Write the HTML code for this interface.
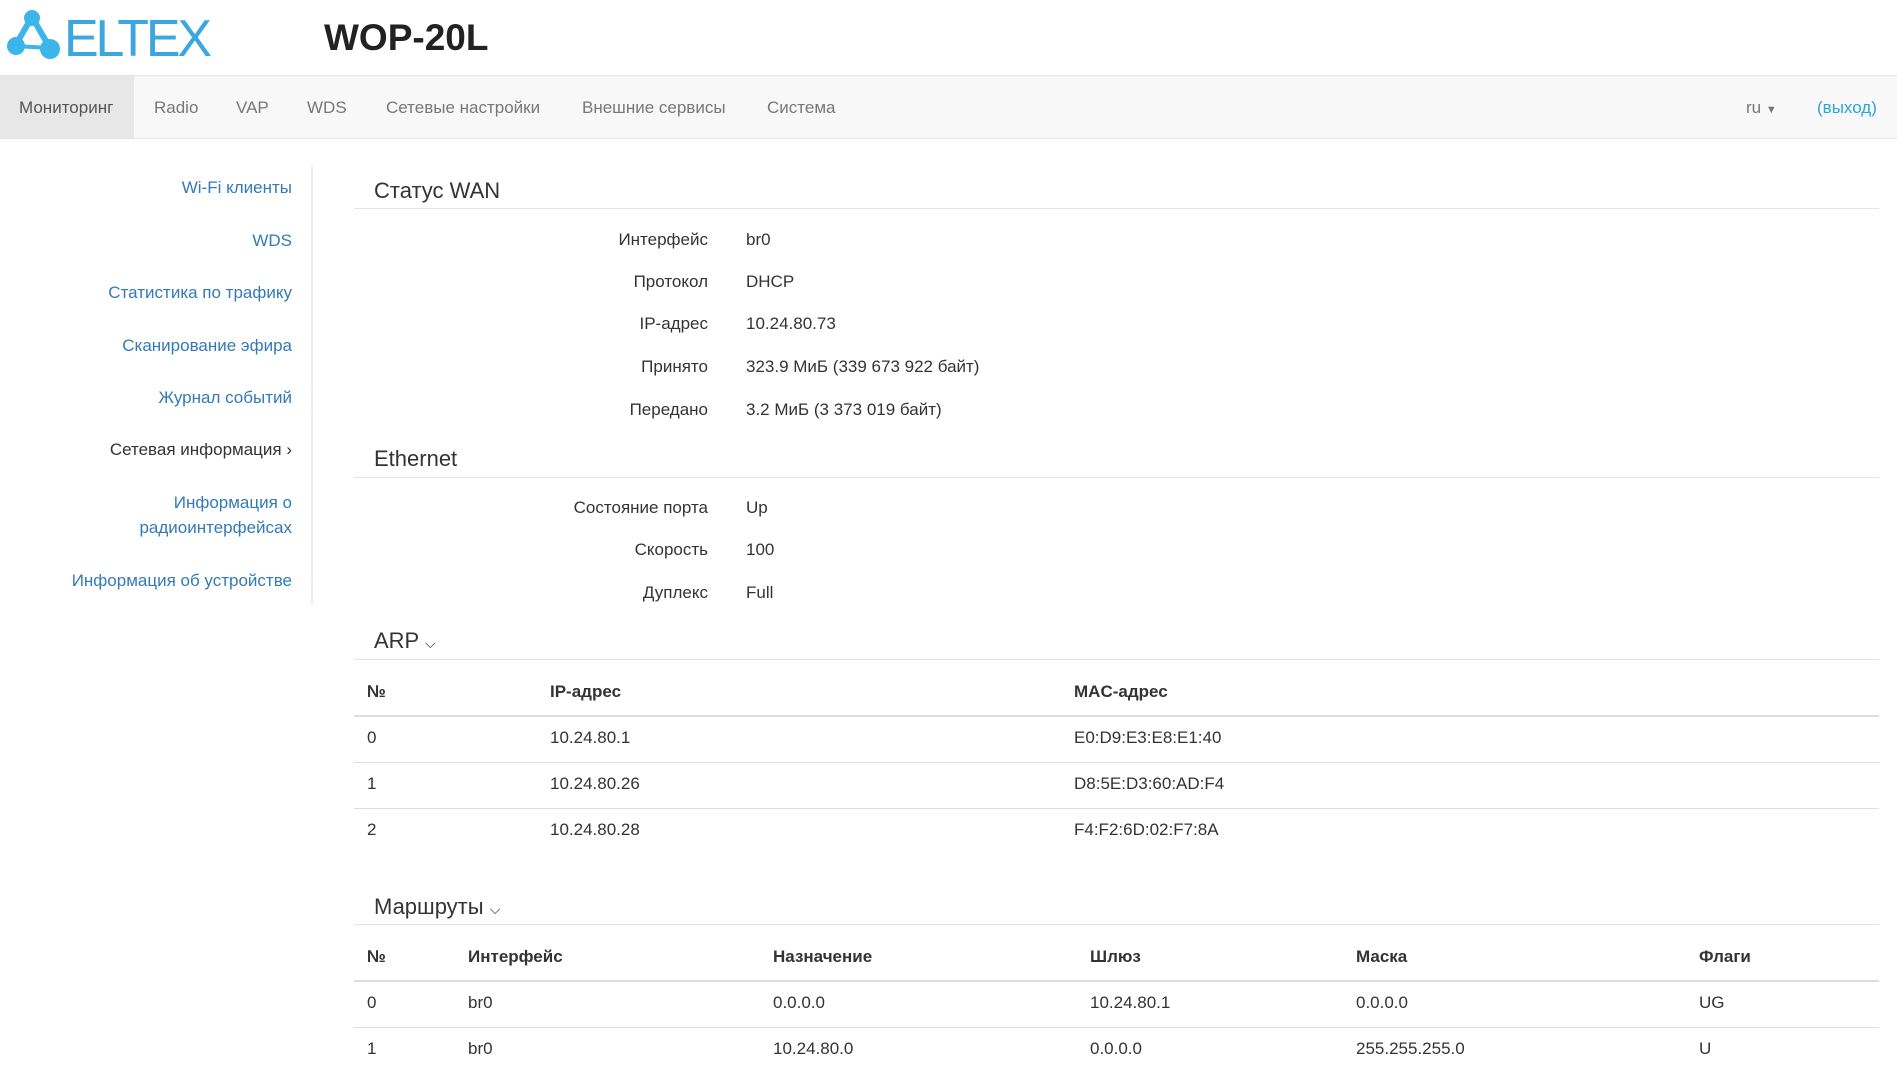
<!DOCTYPE html>
<html><head><meta charset="utf-8"><style>
*{margin:0;padding:0;box-sizing:border-box}
body{width:1897px;height:1079px;overflow:hidden;background:#fff;font-family:"Liberation Sans",Arial,sans-serif;color:#333;font-size:17px;position:relative}
.a{position:absolute;white-space:nowrap;line-height:20px}
.nav{position:absolute;left:0;top:75px;width:1897px;height:64px;background:#f8f8f8;border-top:1px solid #e7e7e7;border-bottom:1px solid #e7e7e7}
.nav .a{color:#777;top:22px}
.side{position:absolute;left:0;width:292px;text-align:right;color:#337ab7;line-height:25px}
.h{position:absolute;left:374px;font-size:22px;color:#333;line-height:26px}
.hr{position:absolute;left:354px;width:1525px;height:1px;background:#e5e5e5}
.lb{position:absolute;right:1189px;text-align:right}
.v{position:absolute;left:746px}
b{font-weight:bold}
</style></head><body>
<svg style="position:absolute;left:0;top:0" width="260" height="70">
<g fill="#3cb5ea" stroke="#3cb5ea">
<line x1="32" y1="17" x2="15" y2="46" stroke-width="6"/>
<line x1="32" y1="17" x2="50" y2="48" stroke-width="6"/>
<line x1="15" y1="46" x2="50" y2="48" stroke-width="4"/>
<circle cx="32" cy="18" r="8" stroke="none"/>
<circle cx="16" cy="46" r="9" stroke="none"/>
<circle cx="50" cy="49" r="10" stroke="none"/>
</g>
<text x="64" y="56" font-family="Liberation Sans,sans-serif" font-size="52" fill="#3ba6e0" letter-spacing="2" textLength="150">ELTEX</text>
</svg>
<div class="a" style="left:324px;top:18px;font-size:37px;line-height:40px;font-weight:bold;color:#222">WOP-20L</div>
<div class="nav">
<div style="position:absolute;left:0;top:0;width:134px;height:62px;background:#e7e7e7"></div>
<div class="a" style="left:19px;color:#555">Мониторинг</div>
<div class="a" style="left:154px">Radio</div>
<div class="a" style="left:236px">VAP</div>
<div class="a" style="left:307px">WDS</div>
<div class="a" style="left:386px">Сетевые настройки</div>
<div class="a" style="left:582px">Внешние сервисы</div>
<div class="a" style="left:767px">Система</div>
<div class="a" style="left:1746px">ru <span style="font-size:11px">▼</span></div>
<div class="a" style="left:1817px;color:#2aa6de">(выход)</div>
</div>
<div style="position:absolute;left:311px;top:166px;width:2px;height:439px;background:#eee"></div>
<div class="side" style="top:175px">Wi-Fi клиенты</div>
<div class="side" style="top:228px">WDS</div>
<div class="side" style="top:280px">Статистика по трафику</div>
<div class="side" style="top:333px">Сканирование эфира</div>
<div class="side" style="top:385px">Журнал событий</div>
<div class="side" style="top:437px;color:#333">Сетевая информация ›</div>
<div class="side" style="top:490px">Информация о<br>радиоинтерфейсах</div>
<div class="side" style="top:568px">Информация об устройстве</div>

<div class="h" style="top:178px">Статус WAN</div><div class="hr" style="top:208px"></div>
<div class="a lb" style="top:230px">Интерфейс</div><div class="a v" style="top:230px">br0</div>
<div class="a lb" style="top:272px">Протокол</div><div class="a v" style="top:272px">DHCP</div>
<div class="a lb" style="top:314px">IP-адрес</div><div class="a v" style="top:314px">10.24.80.73</div>
<div class="a lb" style="top:357px">Принято</div><div class="a v" style="top:357px">323.9 МиБ (339 673 922 байт)</div>
<div class="a lb" style="top:400px">Передано</div><div class="a v" style="top:400px">3.2 МиБ (3 373 019 байт)</div>

<div class="h" style="top:446px">Ethernet</div><div class="hr" style="top:477px"></div>
<div class="a lb" style="top:498px">Состояние порта</div><div class="a v" style="top:498px">Up</div>
<div class="a lb" style="top:540px">Скорость</div><div class="a v" style="top:540px">100</div>
<div class="a lb" style="top:583px">Дуплекс</div><div class="a v" style="top:583px">Full</div>

<div class="h" style="top:628px">ARP <span style="font-size:14px">⌵</span></div><div class="hr" style="top:659px"></div>
<div class="a" style="left:367px;top:682px"><b>№</b></div>
<div class="a" style="left:550px;top:682px"><b>IP-адрес</b></div>
<div class="a" style="left:1074px;top:682px"><b>MAC-адрес</b></div>
<div class="hr" style="top:715px;height:2px;background:#ddd"></div>
<div class="a" style="left:367px;top:728px">0</div><div class="a" style="left:550px;top:728px">10.24.80.1</div><div class="a" style="left:1074px;top:728px">E0:D9:E3:E8:E1:40</div>
<div class="hr" style="top:762px;background:#ddd"></div>
<div class="a" style="left:367px;top:774px">1</div><div class="a" style="left:550px;top:774px">10.24.80.26</div><div class="a" style="left:1074px;top:774px">D8:5E:D3:60:AD:F4</div>
<div class="hr" style="top:808px;background:#ddd"></div>
<div class="a" style="left:367px;top:820px">2</div><div class="a" style="left:550px;top:820px">10.24.80.28</div><div class="a" style="left:1074px;top:820px">F4:F2:6D:02:F7:8A</div>

<div class="h" style="top:894px">Маршруты <span style="font-size:14px">⌵</span></div><div class="hr" style="top:924px"></div>
<div class="a" style="left:367px;top:947px"><b>№</b></div>
<div class="a" style="left:468px;top:947px"><b>Интерфейс</b></div>
<div class="a" style="left:773px;top:947px"><b>Назначение</b></div>
<div class="a" style="left:1090px;top:947px"><b>Шлюз</b></div>
<div class="a" style="left:1356px;top:947px"><b>Маска</b></div>
<div class="a" style="left:1699px;top:947px"><b>Флаги</b></div>
<div class="hr" style="top:980px;height:2px;background:#ddd"></div>
<div class="a" style="left:367px;top:993px">0</div><div class="a" style="left:468px;top:993px">br0</div><div class="a" style="left:773px;top:993px">0.0.0.0</div><div class="a" style="left:1090px;top:993px">10.24.80.1</div><div class="a" style="left:1356px;top:993px">0.0.0.0</div><div class="a" style="left:1699px;top:993px">UG</div>
<div class="hr" style="top:1027px;background:#ddd"></div>
<div class="a" style="left:367px;top:1039px">1</div><div class="a" style="left:468px;top:1039px">br0</div><div class="a" style="left:773px;top:1039px">10.24.80.0</div><div class="a" style="left:1090px;top:1039px">0.0.0.0</div><div class="a" style="left:1356px;top:1039px">255.255.255.0</div><div class="a" style="left:1699px;top:1039px">U</div>
</body></html>
